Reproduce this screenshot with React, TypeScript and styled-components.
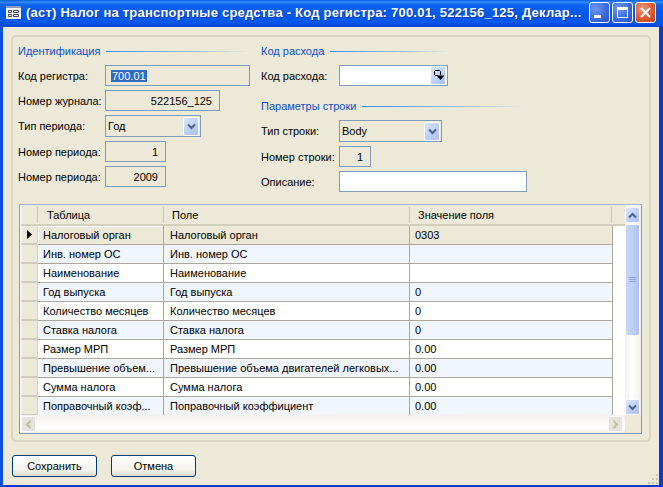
import React from 'react';
import styled, { createGlobalStyle } from 'styled-components';

const GlobalStyle = createGlobalStyle`
  html, body {
    margin: 0;
    padding: 0;
    background: #ece9d8;
  }
  * {
    box-sizing: border-box;
  }
`;

const UI_FONT = '"Liberation Sans", Arial, sans-serif';

const Window = styled.div`
  position: relative;
  width: 663px;
  height: 487px;
  display: flex;
  flex-direction: column;
  overflow: hidden;
  font: 11px ${UI_FONT};
  color: #000;
  background: #ece9d8;
`;

const TitleBar = styled.div`
  height: 27px;
  flex: none;
  display: flex;
  align-items: center;
  padding: 0 7px 3px 6px;
  background: linear-gradient(180deg, #0a5ce6 0%, #2f8dfb 8%, #0f66ee 16%, #0058e8 50%, #0158ee 80%, #0148d4 100%);
`;

const TitleText = styled.div`
  flex: 1;
  margin-left: 5px;
  font: bold 13px ${UI_FONT};
  letter-spacing: 0.22px;
  color: #fff;
  white-space: nowrap;
  text-shadow: 1px 1px 0 #0a3cb0;
`;

const CaptionButtons = styled.div`
  display: flex;
  gap: 2px;
`;

const CaptionButton = styled.div<{ $close?: boolean }>`
  width: 21px;
  height: 21px;
  display: flex;
  align-items: center;
  justify-content: center;
  border: 1px solid #fff;
  border-radius: 3px;
  background: ${(p) =>
    p.$close
      ? 'radial-gradient(circle at 35% 30%, #ec9a7c 0%, #dd5a30 55%, #c23f17 100%)'
      : 'radial-gradient(circle at 30% 30%, #6f98ee 0%, #3a68dc 60%, #2a50c8 100%)'};
`;

const Body = styled.div`
  flex: 1;
  display: flex;
  flex-direction: column;
  border-left: 3px solid #0a50dc;
  border-right: 4px solid #0a3cc8;
  border-bottom: 2px solid #0a3cc8;
  padding: 8px 8px 0;
`;

const Panel = styled.div`
  height: 407px;
  flex: none;
  padding: 6px 7px 0 5px;
  border: 2px solid #d8d5c3;
  border-radius: 5px;
`;

const FormColumns = styled.div`
  display: flex;
  height: 149px;
`;

const Column = styled.div<{ $width: number }>`
  width: ${(p) => p.$width}px;
  flex: none;
  display: flex;
  flex-direction: column;
`;

const SectionTitle = styled.div<{ $width: number; $gap?: number }>`
  width: ${(p) => p.$width}px;
  height: 16px;
  display: flex;
  align-items: center;
  margin-top: ${(p) => p.$gap ?? 0}px;
  margin-bottom: 6px;
  color: #0d4fc9;
  white-space: nowrap;

  &::after {
    content: '';
    flex: 1;
    height: 1px;
    margin-left: 6px;
    background: linear-gradient(90deg, #3f8be8 0%, #8db4e6 50%, #ece9d8 100%);
  }
`;

const Rows = styled.div`
  display: flex;
  flex-direction: column;
  gap: 4px;
`;

const FormRow = styled.div<{ $label: number }>`
  display: grid;
  grid-template-columns: ${(p) => p.$label}px max-content;
  align-items: center;
`;

const FieldLabel = styled.div`
  white-space: nowrap;
`;

const FieldBox = styled.div<{ $width: number; $height?: number; $right?: boolean; $white?: boolean }>`
  width: ${(p) => p.$width}px;
  height: ${(p) => p.$height ?? 21}px;
  display: flex;
  align-items: center;
  justify-content: ${(p) => (p.$right ? 'flex-end' : 'flex-start')};
  padding: ${(p) => (p.$right ? '0 7px 0 0' : '0 1px 0 2px')};
  border: 1px solid #7f9db9;
  background: ${(p) => (p.$white ? '#fff' : 'transparent')};
`;

const Selected = styled.span`
  margin-left: 3px;
  padding: 0 1px;
  background: #316ac5;
  color: #fff;
`;

const ComboText = styled.span`
  flex: 1;
`;

const ComboButton = styled.div`
  width: 16px;
  height: 19px;
  flex: none;
  display: flex;
  align-items: center;
  justify-content: center;
  border: 1px solid #fff;
  border-radius: 2px;
  background: linear-gradient(135deg, #dbe6fd 0%, #bccdf8 60%, #aebff2 100%);
`;

const DataGrid = styled.div`
  width: 623px;
  height: 230px;
  margin: 12px 0 0 1px;
  display: grid;
  grid-template-columns: 1fr 16px;
  grid-template-rows: 210px 18px;
  border: 1px solid #7f9db9;
  border-top-color: #9db4cc;
  padding-left: 1px;
  background: #fff;
`;

const Table = styled.div`
  display: flex;
  flex-direction: column;
  overflow: hidden;
`;

const HeaderRow = styled.div`
  height: 21px;
  flex: none;
  display: grid;
  grid-template-columns: 17px 126px 246px 202px 1fr;
  align-items: center;
  background: #ece9d8;
  border-bottom: 2px solid #d2cfbd;
`;

const HeaderCell = styled.div<{ $pad: number; $edge?: boolean }>`
  height: 16px;
  display: flex;
  align-items: center;
  padding-left: ${(p) => p.$pad}px;
  border-right: ${(p) => (p.$edge ? '0' : '1px solid #c9c6b4')};
  white-space: nowrap;
`;

const DataRow = styled.div`
  height: 19px;
  flex: none;
  display: grid;
  grid-template-columns: 17px 126px 246px 203px;
`;

const Selector = styled.div`
  display: flex;
  align-items: center;
  justify-content: center;
  background: #ece9d8;
  border-bottom: 2px solid #cfccb9;
  border-right: 1px solid #d8d5c4;
`;

const Cell = styled.div<{ $tone: 'plain' | 'tint' | 'current'; $pad: number; $focus?: boolean }>`
  display: flex;
  align-items: center;
  padding-left: ${(p) => p.$pad}px;
  white-space: nowrap;
  overflow: hidden;
  background: ${(p) => (p.$tone === 'current' ? '#ece9d8' : p.$tone === 'tint' ? '#f0f5fe' : '#fff')};
  border-right: 1px solid #aca899;
  border-bottom: 1px solid #aca899;
  box-shadow: ${(p) => (p.$focus ? 'inset 1px 1px 0 #fff' : 'none')};
`;

const VScroll = styled.div`
  display: flex;
  flex-direction: column;
  padding-top: 2px;
  background: linear-gradient(90deg, #f3f1ec 0%, #fff 45%, #f1efe8 100%);
`;

const ScrollButton = styled.div<{ $disabled?: boolean }>`
  width: 15px;
  height: 16px;
  flex: none;
  display: flex;
  align-items: center;
  justify-content: center;
  border: 1px solid #fff;
  border-radius: 2px;
  background: ${(p) =>
    p.$disabled ? '#e6e4da' : 'linear-gradient(135deg, #dbe6fd 0%, #bccdf8 60%, #aebff2 100%)'};
`;

const Thumb = styled.div`
  width: 15px;
  height: 112px;
  flex: none;
  margin-top: 1px;
  display: flex;
  align-items: center;
  justify-content: center;
  border: 1px solid #fff;
  border-radius: 2px;
  background: linear-gradient(90deg, #c5d5fb 0%, #bdcff9 60%, #aebff2 100%);
`;

const Track = styled.div`
  flex: 1;
`;

const HScroll = styled.div`
  display: flex;
  justify-content: space-between;
  align-items: center;
  padding-right: 2px;
  background: linear-gradient(180deg, #f3f1ec 0%, #fff 70%, #f1efe8 100%);
`;

const Corner = styled.div`
  background: #ece9d8;
`;

const Footer = styled.div`
  display: flex;
  gap: 14px;
  padding: 13px 0 0 1px;
`;

const ActionButton = styled.button`
  width: 85px;
  height: 22px;
  padding: 0;
  border: 1px solid #003c74;
  border-radius: 3px;
  background: linear-gradient(180deg, #ffffff 0%, #f5f4ee 70%, #dcd8ce 100%);
  font: 11px ${UI_FONT};
  color: #000;
`;

const ResizeGrip = styled.svg`
  position: absolute;
  right: 4px;
  bottom: 2px;
`;

type Tone = 'plain' | 'tint' | 'current';

type GridRow = {
  table: string;
  field: string;
  value: string;
  tone: Tone;
};

const gridRows: GridRow[] = [
  { table: 'Налоговый орган', field: 'Налоговый орган', value: '0303', tone: 'current' },
  { table: 'Инв. номер ОС', field: 'Инв. номер ОС', value: '', tone: 'tint' },
  { table: 'Наименование', field: 'Наименование', value: '', tone: 'plain' },
  { table: 'Год выпуска', field: 'Год выпуска', value: '0', tone: 'tint' },
  { table: 'Количество месяцев', field: 'Количество месяцев', value: '0', tone: 'plain' },
  { table: 'Ставка налога', field: 'Ставка налога', value: '0', tone: 'tint' },
  { table: 'Размер МРП', field: 'Размер МРП', value: '0.00', tone: 'plain' },
  { table: 'Превышение объем...', field: 'Превышение объема двигателей легковых...', value: '0.00', tone: 'tint' },
  { table: 'Сумма налога', field: 'Сумма налога', value: '0.00', tone: 'plain' },
  { table: 'Поправочный коэф...', field: 'Поправочный коэффициент', value: '0.00', tone: 'tint' },
];

const Chevron = ({ up }: { up?: boolean }) => (
  <svg width="9" height="7" viewBox="0 0 9 7">
    <path
      d={up ? 'M1 5.5L4.5 2L8 5.5' : 'M1 1.5L4.5 5L8 1.5'}
      fill="none"
      stroke="#4d6185"
      strokeWidth="2"
    />
  </svg>
);

const SideChevron = ({ right }: { right?: boolean }) => (
  <svg width="7" height="9" viewBox="0 0 7 9">
    <path
      d={right ? 'M1.5 1L5 4.5L1.5 8' : 'M5.5 1L2 4.5L5.5 8'}
      fill="none"
      stroke="#bdbbae"
      strokeWidth="2"
    />
  </svg>
);

const App = () => {
  return (
    <Window>
      <GlobalStyle />
      <TitleBar>
        <svg width="15" height="13" viewBox="0 0 15 13">
          <rect x="0" y="0" width="15" height="13" fill="#f4f3ee" />
          <rect x="0" y="0" width="15" height="2" fill="#8f9ab8" />
          <path d="M2.5 4.5h3v2h-3zM7.5 4.5h5v2h-5zM2.5 8.5h3v2h-3zM7.5 8.5h5v2h-5z" fill="#fff" stroke="#3c4660" />
        </svg>
        <TitleText>(аст) Налог на транспортные средства - Код регистра: 700.01, 522156_125, Деклар...</TitleText>
        <CaptionButtons>
          <CaptionButton>
            <svg width="13" height="13" viewBox="0 0 13 13">
              <rect x="1" y="9" width="7" height="3" fill="#fff" />
            </svg>
          </CaptionButton>
          <CaptionButton>
            <svg width="13" height="13" viewBox="0 0 13 13">
              <path d="M1.5 3.5h10v8h-10z" fill="none" stroke="#fff" />
              <rect x="1" y="1" width="11" height="2.5" fill="#fff" />
            </svg>
          </CaptionButton>
          <CaptionButton $close>
            <svg width="13" height="13" viewBox="0 0 13 13">
              <path d="M2 2L11 11M11 2L2 11" stroke="#fff" strokeWidth="2" />
            </svg>
          </CaptionButton>
        </CaptionButtons>
      </TitleBar>

      <Body>
        <Panel>
          <FormColumns>
            <Column $width={243}>
              <SectionTitle $width={232}>Идентификация</SectionTitle>
              <Rows>
                <FormRow $label={87}>
                  <FieldLabel>Код регистра:</FieldLabel>
                  <FieldBox $width={145}>
                    <Selected>700.01</Selected>
                  </FieldBox>
                </FormRow>
                <FormRow $label={87}>
                  <FieldLabel>Номер журнала:</FieldLabel>
                  <FieldBox $width={115} $right>522156_125</FieldBox>
                </FormRow>
                <FormRow $label={87}>
                  <FieldLabel>Тип периода:</FieldLabel>
                  <FieldBox $width={96} $height={22}>
                    <ComboText>Год</ComboText>
                    <ComboButton>
                      <Chevron />
                    </ComboButton>
                  </FieldBox>
                </FormRow>
                <FormRow $label={87}>
                  <FieldLabel>Номер периода:</FieldLabel>
                  <FieldBox $width={61} $right>1</FieldBox>
                </FormRow>
                <FormRow $label={87}>
                  <FieldLabel>Номер периода:</FieldLabel>
                  <FieldBox $width={61} $right>2009</FieldBox>
                </FormRow>
              </Rows>
            </Column>
            <Column $width={300}>
              <SectionTitle $width={189}>Код расхода</SectionTitle>
              <FormRow $label={78}>
                <FieldLabel>Код расхода:</FieldLabel>
                <FieldBox $width={109} $white>
                  <ComboText />
                  <ComboButton>
                    <svg width="11" height="11" viewBox="0 0 11 11">
                      <path d="M5 5.5H2.5L1.5 4.5V1.5L2.5 0.5H6.5L7.5 1.5V5" fill="none" stroke="#000" />
                      <path d="M3.5 5.5h8L7.5 10z" fill="#000" />
                    </svg>
                  </ComboButton>
                </FieldBox>
              </FormRow>
              <SectionTitle $width={265} $gap={12}>Параметры строки</SectionTitle>
              <Rows>
                <FormRow $label={78}>
                  <FieldLabel>Тип строки:</FieldLabel>
                  <FieldBox $width={103} $height={22}>
                    <ComboText>Body</ComboText>
                    <ComboButton>
                      <Chevron />
                    </ComboButton>
                  </FieldBox>
                </FormRow>
                <FormRow $label={78}>
                  <FieldLabel>Номер строки:</FieldLabel>
                  <FieldBox $width={32} $right>1</FieldBox>
                </FormRow>
                <FormRow $label={78}>
                  <FieldLabel>Описание:</FieldLabel>
                  <FieldBox $width={188} $white />
                </FormRow>
              </Rows>
            </Column>
          </FormColumns>

          <DataGrid>
            <Table>
              <HeaderRow>
                <HeaderCell $pad={0} />
                <HeaderCell $pad={9}>Таблица</HeaderCell>
                <HeaderCell $pad={8}>Поле</HeaderCell>
                <HeaderCell $pad={8}>Значение поля</HeaderCell>
                <HeaderCell $pad={0} $edge />
              </HeaderRow>
              {gridRows.map((row, i) => (
                <DataRow key={row.table}>
                  <Selector>
                    {i === 0 && (
                      <svg width="5" height="9" viewBox="0 0 5 9">
                        <path d="M0 0L5 4.5L0 9z" fill="#000" />
                      </svg>
                    )}
                  </Selector>
                  <Cell $tone={row.tone} $pad={5} $focus={i === 0}>{row.table}</Cell>
                  <Cell $tone={row.tone} $pad={6}>{row.field}</Cell>
                  <Cell $tone={row.tone} $pad={5}>{row.value}</Cell>
                </DataRow>
              ))}
            </Table>
            <VScroll>
              <ScrollButton>
                <Chevron up />
              </ScrollButton>
              <Thumb>
                <svg width="7" height="6" viewBox="0 0 7 6">
                  <path d="M0 0.5h7M0 2.5h7M0 4.5h7" stroke="#8ea4d8" />
                </svg>
              </Thumb>
              <Track />
              <ScrollButton>
                <Chevron />
              </ScrollButton>
            </VScroll>
            <HScroll>
              <ScrollButton $disabled>
                <SideChevron />
              </ScrollButton>
              <ScrollButton $disabled>
                <SideChevron right />
              </ScrollButton>
            </HScroll>
            <Corner />
          </DataGrid>
        </Panel>

        <Footer>
          <ActionButton>Сохранить</ActionButton>
          <ActionButton>Отмена</ActionButton>
        </Footer>
      </Body>

      <ResizeGrip width="12" height="12" viewBox="0 0 12 12">
        <path d="M9 1h2v2H9zM5 5h2v2H5zM9 5h2v2H9zM1 9h2v2H1zM5 9h2v2H5zM9 9h2v2H9z" fill="#c8c5b2" />
      </ResizeGrip>
    </Window>
  );
};

export default App;
